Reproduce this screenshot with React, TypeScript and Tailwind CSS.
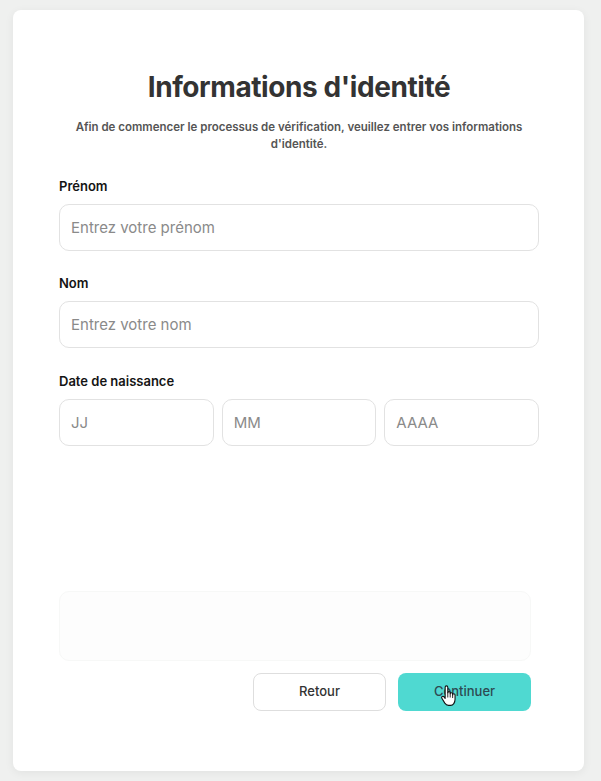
import React from 'react';

const HandCursor: React.FC = () => (
  <svg className="h-[22px] w-[18px]" viewBox="0 0 16 20" xmlns="http://www.w3.org/2000/svg">
    <path
      d="M4.5 2C4.5 1.2 5.1 0.8 5.7 0.8C6.3 0.8 6.9 1.2 6.9 2V7C6.9 6.3 7.4 6 8 6C8.6 6 9.1 6.3 9.1 7V8C9.1 7.3 9.6 7 10.2 7C10.8 7 11.3 7.3 11.3 8V9C11.3 8.3 11.8 8 12.4 8C13 8 13.5 8.4 13.5 9V13C13.5 16 11.8 18.5 9.5 18.5H7.5C6 18.5 5 17.7 4.2 16.5L1.5 12C1.1 11.4 1.3 10.7 1.9 10.4C2.5 10.1 3.1 10.3 3.5 10.8L4.5 12.2Z"
      fill="#fff"
      stroke="#111"
      strokeWidth={1}
      strokeLinejoin="round"
    />
    <path d="M6.9 7V11M9.1 8V11M11.3 9V11.5" stroke="#111" strokeWidth={0.8} strokeLinecap="round" fill="none" />
  </svg>
);

interface FieldProps {
  placeholder: string;
}

const Field: React.FC<FieldProps> = ({ placeholder }) => (
  <input
    type="text"
    placeholder={placeholder}
    className="h-[47px] w-full min-w-0 rounded-[10px] border border-[#e2e2e2] bg-white px-[11px] text-[15px] text-[#333] outline-none placeholder:text-[#8a8a8a]"
  />
);

const Label: React.FC<{ children: React.ReactNode }> = ({ children }) => (
  <label className="mb-[9px] block text-[13px] font-semibold leading-[18px] text-[#141414]">{children}</label>
);

export default function App() {
  return (
    <div
      className="min-h-[781px] bg-[#eff0ef] pl-[13px] pt-[10px] pb-[10px]"
      style={{ fontFamily: 'Inter, "Noto Sans", sans-serif' }}
    >
      <div className="flex h-[761px] w-[571px] flex-col rounded-[8px] bg-white pl-[46px] pr-[45px] pt-[60px] shadow-[0_2px_10px_rgba(0,0,0,0.06)]">
        <h1 className="text-center text-[28px] font-bold leading-[34px] tracking-[-0.015em] text-[#333]">
          Informations d'identité
        </h1>
        <p className="mx-auto mt-[15px] max-w-[470px] text-center text-[11.5px] font-semibold leading-[17px] text-[#555]">
          Afin de commencer le processus de vérification, veuillez entrer vos informations d'identité.
        </p>

        <div className="mt-[24px]">
          <Label>Prénom</Label>
          <Field placeholder="Entrez votre prénom" />
        </div>

        <div className="mt-[23px]">
          <Label>Nom</Label>
          <Field placeholder="Entrez votre nom" />
        </div>

        <div className="mt-[24px]">
          <Label>Date de naissance</Label>
          <div className="grid grid-cols-3 gap-2">
            <Field placeholder="JJ" />
            <Field placeholder="MM" />
            <Field placeholder="AAAA" />
          </div>
        </div>

        <div className="mt-[145px] mr-[8px] h-[70px] rounded-[10px] border border-[#f7f8f7] bg-[#fdfdfd]" />

        <div className="mt-[12px] mr-[8px] flex justify-end gap-3">
          <button className="h-[38px] w-[133px] rounded-[8px] border border-[#dedede] bg-white text-[13px] font-medium text-[#333]">
            Retour
          </button>
          <button className="relative h-[38px] w-[133px] rounded-[8px] bg-[#4fd9d1] text-[13px] font-medium text-[#2d4a52]">
            Continuer
            <span className="absolute left-[42px] top-[12px]">
              <HandCursor />
            </span>
          </button>
        </div>
      </div>
    </div>
  );
}
